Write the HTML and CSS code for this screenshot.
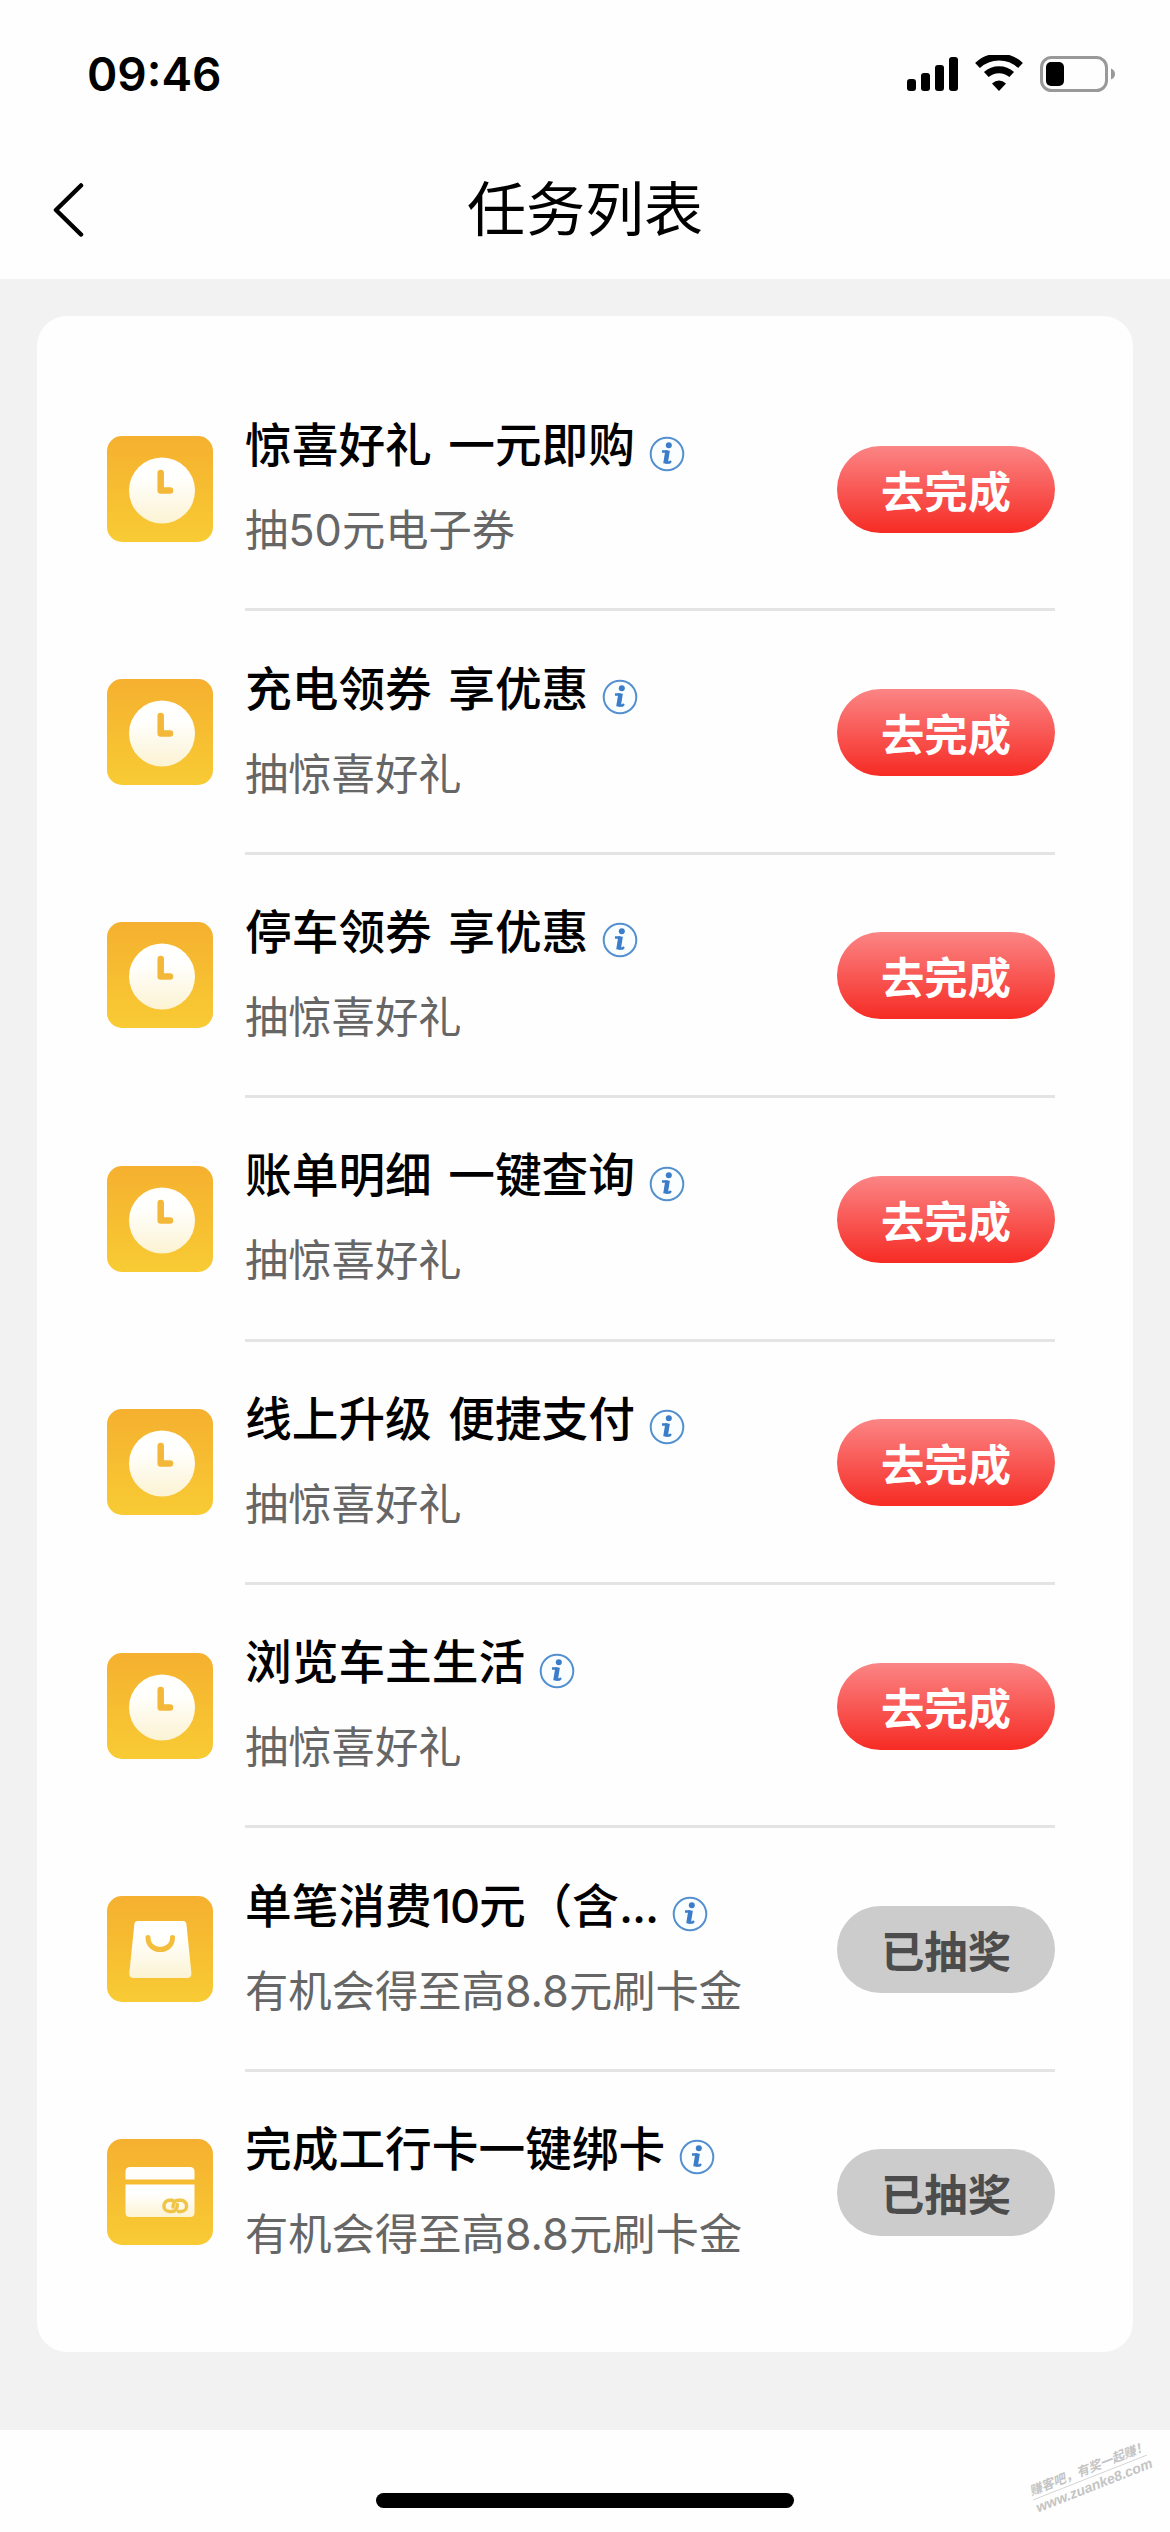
FILE: index.html
```html
<!DOCTYPE html>
<html lang="zh-CN">
<head>
<meta charset="utf-8">
<title>任务列表</title>
<link rel="stylesheet" href="styles.css">
</head>
<body>
<svg class="defs" width="0" height="0" aria-hidden="true">
  <defs>
    <linearGradient id="tile" x1="0" y1="0" x2="0" y2="1"><stop offset="0" stop-color="#f5b02f"/><stop offset="1" stop-color="#f8cb34"/></linearGradient>
    <linearGradient id="paper" x1="0" y1="0" x2="0" y2="1"><stop offset="0.3" stop-color="#fffffd"/><stop offset="1" stop-color="#fcf3d3"/></linearGradient>
  </defs>
  <symbol id="clock" viewBox="0 0 106 106">
    <rect width="106" height="106" rx="15" fill="url(#tile)"/>
    <circle cx="55" cy="54.5" r="33" fill="url(#paper)"/>
    <path d="M53.7 37V54.5H63" fill="none" stroke="#f3b83a" stroke-width="6.500" stroke-linecap="round" stroke-linejoin="round"/>
  </symbol>
  <symbol id="bag" viewBox="0 0 106 106">
    <rect width="106" height="106" rx="15" fill="url(#tile)"/>
    <path d="M31 25H76Q79 25 79.400 28L84.400 77Q84.700 82 80 82H26.500Q22 82 22.300 77L27.400 28Q27.700 25 31 25Z" fill="url(#paper)"/>
    <path d="M41 41.500C41 57.500 65.500 57.500 65.500 41.500" fill="none" stroke="#f4bd3b" stroke-width="5" stroke-linecap="round"/>
  </symbol>
  <symbol id="card" viewBox="0 0 106 106">
    <rect width="106" height="106" rx="15" fill="url(#tile)"/>
    <path d="M18.500 40.500V32.500Q18.500 28 23 28H83Q87.500 28 87.500 32.500V40.500Z" fill="#fffefa"/>
    <path d="M18.500 45.500H87.500V73.500Q87.500 78 83 78H23Q18.500 78 18.500 73.500Z" fill="url(#paper)"/>
    <path d="M65.500 61.300H62.500A5.600 5.600 0 0 0 62.500 72.500H64.500Q70.300 72.500 70.300 65.500" fill="none" stroke="#efc548" stroke-width="3.500" stroke-linecap="round"/>
    <path d="M71.500 72.500H74A5.600 5.600 0 0 0 74 61.300H71.500Q66 61.300 66 68" fill="none" stroke="#efc548" stroke-width="3.500" stroke-linecap="round"/>
  </symbol>
  <symbol id="info" viewBox="0 0 36 36">
    <circle cx="18" cy="18" r="16.300" fill="#fbfeff" stroke="#5490cf" stroke-width="2"/>
    <circle cx="19.800" cy="9.300" r="3" fill="#3b7dc8"/>
    <path d="M13 15.500H18.500M16.500 26.500H20.500L22 25" fill="none" stroke="#3b7dc8" stroke-width="2.400"/>
    <path d="M18.600 14.500L16.500 27.500" stroke="#3b7dc8" stroke-width="4.600"/>
  </symbol>
</svg>

<header class="top">
  <div class="status">
    <span class="time">09:46</span>
    <svg class="status-icons" width="210" height="38" viewBox="0 0 210 38" aria-hidden="true">
      <rect x="2" y="24" width="9" height="12" rx="3"/><rect x="16" y="18" width="9" height="18" rx="3"/><rect x="30" y="10" width="9" height="26" rx="3"/><rect x="44" y="2" width="9" height="34" rx="3"/>
      <g fill="none" stroke="#000" stroke-width="7">
        <path d="M72.500 10.500A31.500 31.500 0 0 1 115.500 10.500"/>
        <path d="M81.300 19.500A19 19 0 0 1 106.700 19.500"/>
      </g>
      <path d="M87 28.500Q94 22.500 101 28.500L94 36Z"/>
      <rect x="136.500" y="2.500" width="65" height="33" rx="10" fill="none" stroke="#999" stroke-width="3"/>
      <rect x="141" y="7" width="18" height="24" rx="5"/>
      <path d="M206 13.500Q210 15 210 19T206 24.500Z" fill="#999"/>
    </svg>
  </div>
  <div class="nav">
    <svg class="back" width="34" height="56" viewBox="0 0 34 56" aria-label="返回"><path d="M31 3.500L6 28L31 52.500" fill="none" stroke="#000" stroke-width="4.500" stroke-linecap="round" stroke-linejoin="round"/></svg>
    <h1>任务列表</h1>
  </div>
</header>

<main>
  <ul class="tasks">
    <li><svg class="tile"><use href="#clock"/></svg><div class="row"><div class="text"><h2><span>惊喜好礼 一元即购</span><svg class="info"><use href="#info"/></svg></h2><p>抽50元电子券</p></div><button class="go">去完成</button></div></li>
    <li><svg class="tile"><use href="#clock"/></svg><div class="row"><div class="text"><h2><span>充电领券 享优惠</span><svg class="info"><use href="#info"/></svg></h2><p>抽惊喜好礼</p></div><button class="go">去完成</button></div></li>
    <li><svg class="tile"><use href="#clock"/></svg><div class="row"><div class="text"><h2><span>停车领券 享优惠</span><svg class="info"><use href="#info"/></svg></h2><p>抽惊喜好礼</p></div><button class="go">去完成</button></div></li>
    <li><svg class="tile"><use href="#clock"/></svg><div class="row"><div class="text"><h2><span>账单明细 一键查询</span><svg class="info"><use href="#info"/></svg></h2><p>抽惊喜好礼</p></div><button class="go">去完成</button></div></li>
    <li><svg class="tile"><use href="#clock"/></svg><div class="row"><div class="text"><h2><span>线上升级 便捷支付</span><svg class="info"><use href="#info"/></svg></h2><p>抽惊喜好礼</p></div><button class="go">去完成</button></div></li>
    <li><svg class="tile"><use href="#clock"/></svg><div class="row"><div class="text"><h2><span>浏览车主生活</span><svg class="info"><use href="#info"/></svg></h2><p>抽惊喜好礼</p></div><button class="go">去完成</button></div></li>
    <li><svg class="tile"><use href="#bag"/></svg><div class="row"><div class="text"><h2><span>单笔消费<span class="tight">10</span>元（含<span class="tight">...</span></span><svg class="info"><use href="#info"/></svg></h2><p>有机会得至高8.8元刷卡金</p></div><button class="go done">已抽奖</button></div></li>
    <li><svg class="tile"><use href="#card"/></svg><div class="row"><div class="text"><h2><span>完成工行卡一键绑卡</span><svg class="info"><use href="#info"/></svg></h2><p>有机会得至高8.8元刷卡金</p></div><button class="go done">已抽奖</button></div></li>
  </ul>
</main>

<footer>
  <div class="home"></div>
  <div class="mark"><span class="slogan">赚客吧，有奖一起赚！</span><span class="url">www.zuanke8.com</span></div>
</footer>
</body>
</html>
```
FILE: styles.css
```css
* { box-sizing: border-box; }
body {
  margin: 0;
  width: 1170px;
  height: 2532px;
  display: flex;
  flex-direction: column;
  overflow: hidden;
  background: #f2f2f2;
  color: #000;
  font-family: Inter, "Noto Sans CJK SC", sans-serif;
}
.defs { position: absolute; }
h1, h2, p, ul { margin: 0; padding: 0; }

.top { height: 279px; background: #fefefe; }
.status {
  height: 140px;
  padding: 8px 55px 0 87px;
  display: flex;
  align-items: center;
  justify-content: space-between;
}
.time { font-size: 46px; font-weight: 600; line-height: 56px; }
.status-icons { display: block; }
.nav {
  height: 139px;
  padding: 0 50px;
  display: grid;
  grid-template-columns: 34px 1fr 34px;
  align-items: center;
}
.nav h1 { font-size: 59px; font-weight: 400; line-height: 80px; text-align: center; }
.back { display: block; }

main { height: 2151px; padding: 37px; }
.tasks {
  height: 2036px;
  padding: 52px 78px 0 70px;
  border-radius: 30px;
  background: #fefefe;
  list-style: none;
}
.tasks li { height: 243.4px; display: flex; align-items: center; gap: 32px; }
.tile { flex: none; width: 106px; height: 106px; margin-bottom: 2px; }
.row {
  flex: 1;
  height: 100%;
  display: flex;
  align-items: center;
  justify-content: space-between;
  border-bottom: 3px solid #e4e4e4;
}
.tasks li:last-child .row { border-bottom-color: transparent; }
.text { display: flex; flex-direction: column; gap: 19px; margin-bottom: 1px; }
.text h2 {
  display: flex;
  align-items: center;
  gap: 14px;
  font-size: 46.7px;
  font-weight: 500;
  line-height: 66px;
  word-spacing: 4px;
  white-space: nowrap;
}
.tight { letter-spacing: -1.2px; }
.info { width: 36px; height: 36px; margin-top: 17px; }
.text p { font-size: 43.3px; line-height: 66px; color: #666; white-space: nowrap; }
.go {
  width: 218px;
  height: 87px;
  margin-top: 2px;
  padding: 0;
  border: 0;
  border-radius: 44px;
  background: linear-gradient(#fb8585, #f62b24);
  color: #fff;
  font: 700 43.3px/87px "Noto Sans CJK SC", sans-serif;
}
.go.done { background: #ccc; color: #4c4c4c; }

footer {
  position: relative;
  flex: 1;
  display: flex;
  justify-content: center;
  align-items: flex-end;
  padding-bottom: 24px;
  background: #fefefe;
}
.home { width: 418px; height: 15px; border-radius: 8px; background: #000; }
.mark {
  position: absolute;
  left: 1029px;
  top: 31px;
  width: 122px;
  display: flex;
  flex-direction: column;
  color: #c4c4c4;
  font: italic 700 14px/16px "Liberation Sans", "Noto Sans CJK SC", sans-serif;
  transform: rotate(-21.5deg);
  white-space: nowrap;
}
.slogan { border-bottom: 1px solid #d0d0d0; font-size: 12.6px; }
```
